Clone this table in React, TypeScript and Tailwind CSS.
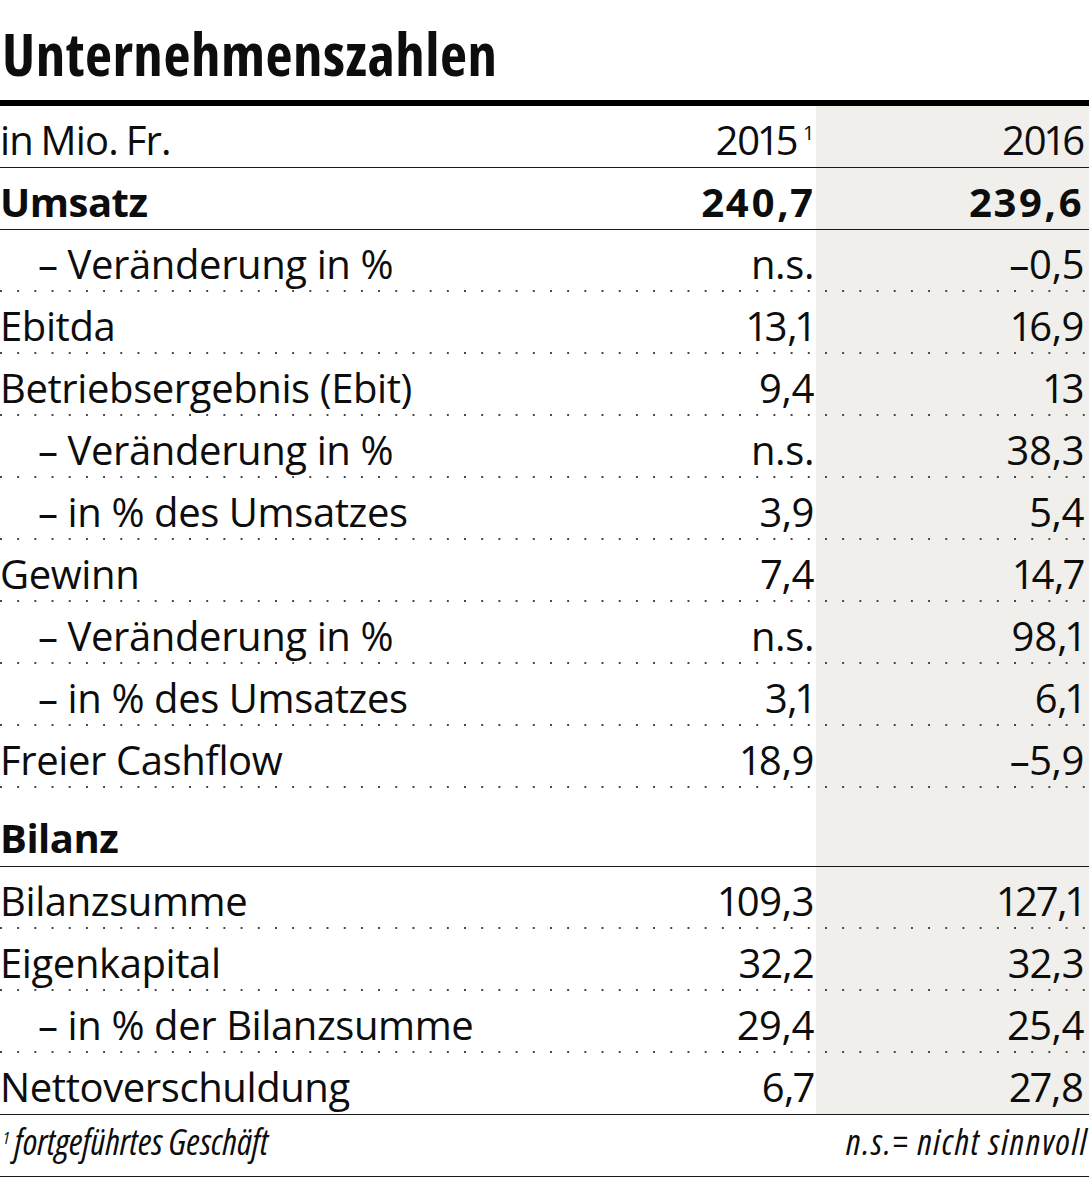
import React from "react";

type Row = {
  label: string;
  a: string;
  b: string;
  indent?: boolean;
  bold?: boolean;
  line: "dot" | "solid";
  tall?: boolean;
};

const rows: Row[] = [
  { label: "Umsatz", a: "240,7", b: "239,6", bold: true, line: "solid" },
  { label: "– Veränderung in %", a: "n.s.", b: "–0,5", indent: true, line: "dot" },
  { label: "Ebitda", a: "13,1", b: "16,9", line: "dot" },
  { label: "Betriebsergebnis (Ebit)", a: "9,4", b: "13", line: "dot" },
  { label: "– Veränderung in %", a: "n.s.", b: "38,3", indent: true, line: "dot" },
  { label: "– in % des Umsatzes", a: "3,9", b: "5,4", indent: true, line: "dot" },
  { label: "Gewinn", a: "7,4", b: "14,7", line: "dot" },
  { label: "– Veränderung in %", a: "n.s.", b: "98,1", indent: true, line: "dot" },
  { label: "– in % des Umsatzes", a: "3,1", b: "6,1", indent: true, line: "dot" },
  { label: "Freier Cashflow", a: "18,9", b: "–5,9", line: "dot" },
  { label: "Bilanz", a: "", b: "", bold: true, line: "solid", tall: true },
  { label: "Bilanzsumme", a: "109,3", b: "127,1", line: "dot" },
  { label: "Eigenkapital", a: "32,2", b: "32,3", line: "dot" },
  { label: "– in % der Bilanzsumme", a: "29,4", b: "25,4", indent: true, line: "dot" },
  { label: "Nettoverschuldung", a: "6,7", b: "27,8", line: "solid" },
];

const body = { fontFamily: '"Open Sans", "Noto Sans", sans-serif' } as React.CSSProperties;
const condensed = { fontFamily: '"Open Sans", sans-serif', fontStretch: "75%" } as React.CSSProperties;

function Sep({ kind }: { kind: "dot" | "solid" }) {
  if (kind === "solid")
    return <div className="absolute bottom-0 left-0 right-0 h-px bg-[#1a1a1a]" />;
  return (
    <div className="absolute bottom-0 left-0 right-0 h-[2px] bg-[linear-gradient(to_right,#444_2px,transparent_2px)] bg-size-[17.2px_2px] bg-left" />
  );
}

export default function App() {
  return (
    <div className="w-[1091px] bg-white text-[#0d0d0d]" style={body}>
      <div className="w-[1089px]">
        <div
          className="h-[100px] pt-[24px] pl-[2px] text-[59px] leading-[59px] font-bold tracking-[0.5px]"
          style={condensed}
        >
          Unternehmenszahlen
        </div>
        <div className="h-[6px] bg-black" />

        <div className="relative flex h-[62px] text-[40px] leading-[54px] tracking-[-0.4px] proportional-nums">
          <div className="flex-1 pt-[7px] tracking-[-0.8px] [word-spacing:-2px]">in Mio. Fr.</div>
          <div className="w-[216px] pt-[7px] pr-[4px] text-right tracking-[-1px]">
            2015<span className="relative -top-[15px] ml-[7px] text-[20px]">1</span>
          </div>
          <div className="w-[273px] bg-[#f0efeb] pt-[7px] pr-[5px] text-right tracking-[-1px]">2016</div>
          <Sep kind="solid" />
        </div>

        {rows.map((r, i) => (
          <div
            key={i}
            className={`relative flex text-[40px] leading-[54px] proportional-nums ${r.tall ? "h-[79px]" : "h-[62px]"} ${r.bold ? "font-bold" : "tracking-[-0.4px]"}`}
          >
            <div className={`flex-1 ${r.tall ? "pt-[23px]" : "pt-[7px]"} ${r.indent ? "pl-[38px]" : "pl-0"} ${r.bold ? "tracking-[-0.5px]" : ""}`}>
              {r.label}
            </div>
            <div className={`w-[216px] ${r.tall ? "pt-[23px]" : "pt-[7px]"} pr-[2px] text-right ${r.bold ? "tracking-[2px]" : ""}`}>
              {r.a}
            </div>
            <div className={`w-[273px] bg-[#f0efeb] ${r.tall ? "pt-[23px]" : "pt-[7px]"} pr-[5px] text-right ${r.bold ? "tracking-[2px]" : ""}`}>
              {r.b}
            </div>
            <Sep kind={r.line} />
          </div>
        ))}

        <div className="relative flex h-[62px] items-start pt-[9px] text-[36px] leading-[36px] italic font-normal" style={condensed}>
          <div className="flex-1 pl-[3px]">
            <span className="relative -top-[11px] mr-[5px] text-[17px]">1</span>fortgeführtes Geschäft
          </div>
          <div className="pr-[1px] text-right tracking-[1.6px]">n.s.= nicht sinnvoll</div>
          <Sep kind="solid" />
        </div>
      </div>
    </div>
  );
}
